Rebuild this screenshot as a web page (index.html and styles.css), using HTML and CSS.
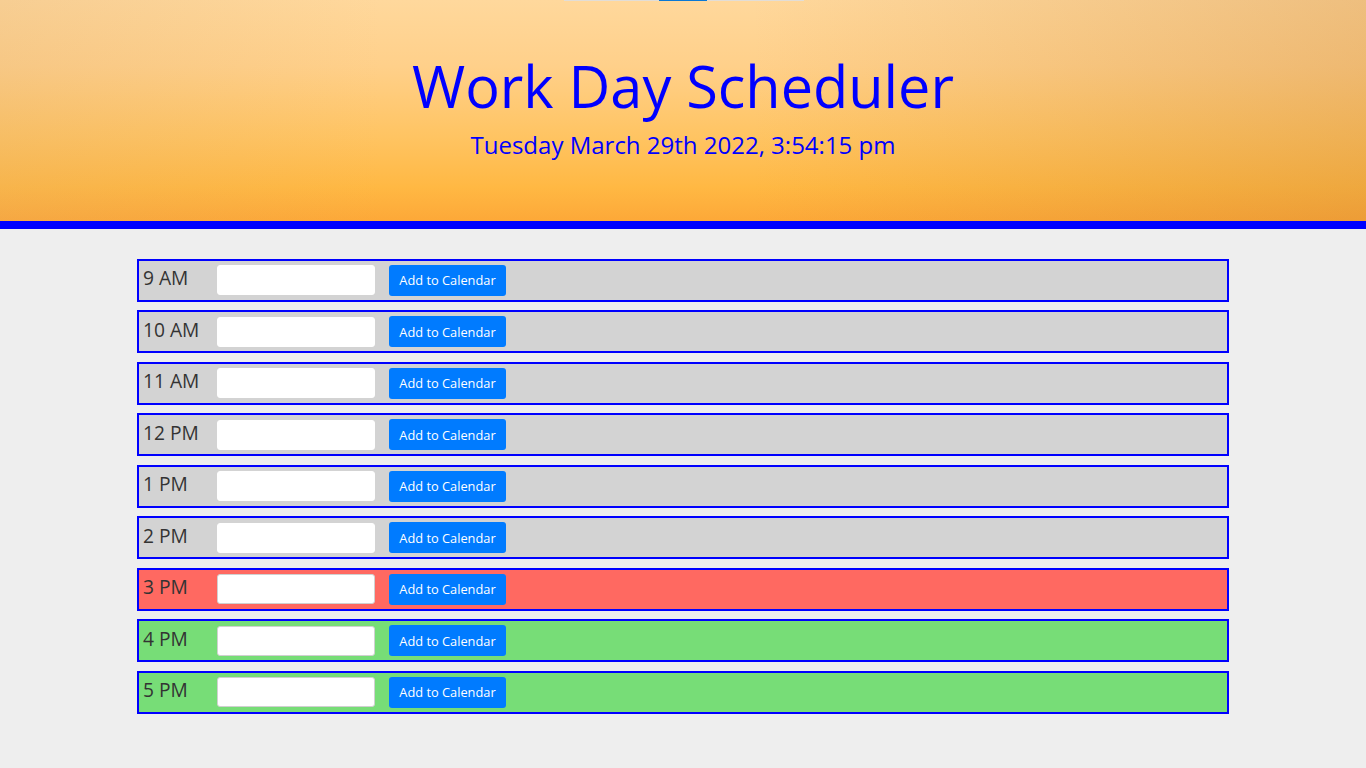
FILE: index.html
```html
<!DOCTYPE html>
<html lang="en">
<head>
<meta charset="utf-8">
<title>Work Day Scheduler</title>
<link rel="stylesheet" href="styles.css">
</head>
<body>
<header class="jumbotron">
  <div class="progress-strip"><span class="seg-a"></span><span class="seg-b"></span><span class="seg-c"></span></div>
  <h1 class="title">Work Day Scheduler</h1>
  <p class="lead">Tuesday March 29th 2022, 3:54:15 pm</p>
</header>
<main class="container">
  <div class="time-block past"><div class="hour">9 AM</div><input class="description" type="text"><button class="saveBtn">Add to Calendar</button></div>
  <div class="time-block past"><div class="hour">10 AM</div><input class="description" type="text"><button class="saveBtn">Add to Calendar</button></div>
  <div class="time-block past"><div class="hour">11 AM</div><input class="description" type="text"><button class="saveBtn">Add to Calendar</button></div>
  <div class="time-block past"><div class="hour">12 PM</div><input class="description" type="text"><button class="saveBtn">Add to Calendar</button></div>
  <div class="time-block past"><div class="hour">1 PM</div><input class="description" type="text"><button class="saveBtn">Add to Calendar</button></div>
  <div class="time-block past"><div class="hour">2 PM</div><input class="description" type="text"><button class="saveBtn">Add to Calendar</button></div>
  <div class="time-block present"><div class="hour">3 PM</div><input class="description" type="text"><button class="saveBtn">Add to Calendar</button></div>
  <div class="time-block future"><div class="hour">4 PM</div><input class="description" type="text"><button class="saveBtn">Add to Calendar</button></div>
  <div class="time-block future"><div class="hour">5 PM</div><input class="description" type="text"><button class="saveBtn">Add to Calendar</button></div>
</main>
</body>
</html>
```

FILE: styles.css
```css
* { box-sizing: border-box; }

html, body {
  margin: 0;
  padding: 0;
}

body {
  background: #eeeeee;
  font-family: "Open Sans", "Liberation Sans", sans-serif;
  color: #333;
}

.jumbotron {
  height: 229px;
  border-bottom: 8px solid #0000ff;
  text-align: center;
  color: #0000ff;
  background:
    linear-gradient(to right, rgba(215, 165, 110, 0.2) 0%, rgba(255, 255, 255, 0) 28%, rgba(255, 255, 255, 0) 55%, rgba(195, 125, 50, 0.28) 100%),
    linear-gradient(to bottom, #ffd89c 0%, #ffd08a 30%, #ffc462 62%, #ffb843 85%, #fda838 100%);
}

.progress-strip {
  display: flex;
  width: 240px;
  height: 1px;
  margin: 0 auto;
  transform: translateX(1px);
}
.seg-a { width: 95px; background: #e2ddd6; }
.seg-b { width: 48px; background: #0a78d4; }
.seg-c { width: 97px; background: #e2ddd6; }

.title {
  margin: 50px 0 0;
  font-size: 57.6px;
  font-weight: 400;
  line-height: 70px;
}

.lead {
  margin: 9px 0 0;
  font-size: 24px;
  font-weight: 400;
  line-height: 30px;
}

.container {
  width: 1092px;
  margin: 29.6px auto 0;
  display: flex;
  flex-direction: column;
  gap: 8.5px;
}

.time-block {
  height: 43px;
  border: 2px solid #0000ff;
  display: flex;
  align-items: center;
  padding-left: 4px;
}

.past { background: #d3d3d3; }
.present { background: #ff6961; }
.future { background: #77dd77; }

.hour {
  width: 74px;
  font-size: 19.2px;
  line-height: 24px;
  margin-top: -4px;
  color: #333;
}

.description {
  width: 158px;
  height: 30px;
  border: 1px solid #d0d0d0;
  border-radius: 3px;
  background: #fff;
  margin: 0;
  padding: 0 6px;
}
.past .description { border-color: #ffffff; }

.saveBtn {
  margin-left: 14px;
  width: 117px;
  height: 31px;
  border: none;
  border-radius: 3px;
  background: #007bff;
  color: #fff;
  font-family: "Open Sans", "Liberation Sans", sans-serif;
  font-size: 12.8px;
  padding: 0;
  cursor: pointer;
}
```
